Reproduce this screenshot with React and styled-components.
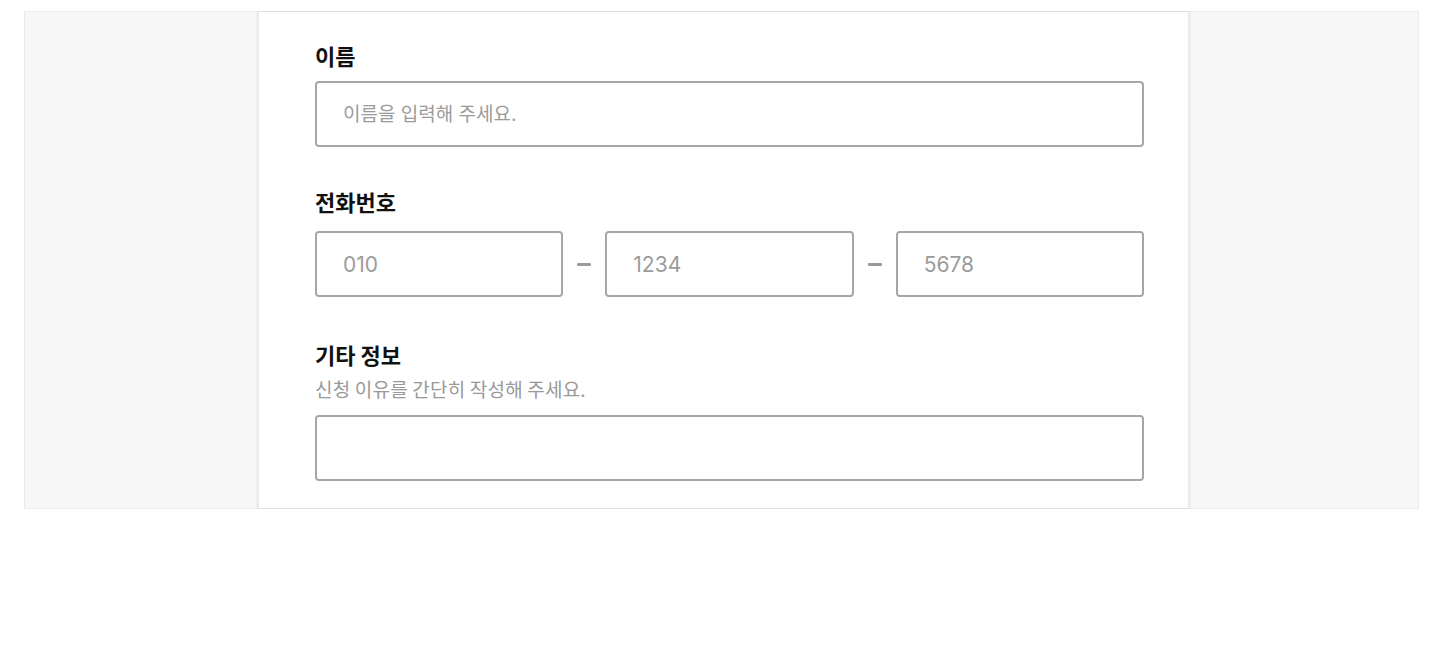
import styled, { createGlobalStyle } from "styled-components"

const GlobalStyle = createGlobalStyle`
  html, body {
    margin: 0;
    padding: 0;
    background: #fff;
  }
  body {
    font-family: "Noto Sans CJK KR", "Noto Sans", sans-serif;
    color: #111;
  }
  * { box-sizing: border-box; }
`;

const Frame = styled.div`
  margin: 11px 31px 0 24px;
  height: 498px;
  background: #f7f7f7;
  border: 1px solid #ebebeb;
  padding-left: 233px;
  display: flex;
`;

const Panel = styled.div`
  width: 931px;
  background: #fff;
  box-shadow: 1px 0 2px rgba(0, 0, 0, 0.08), -1px 0 2px rgba(0, 0, 0, 0.08);
  border-left: 1px solid #ececec;
  border-right: 1px solid #ececec;
  padding: 28px 44px 28px 56px;
  display: flex;
  flex-direction: column;
`;

const Field = styled.div`
  display: flex;
  flex-direction: column;
  margin-top: ${p => p.$top || 0}px;
`;

const Label = styled.div`
  font-size: 22px;
  font-weight: 700;
  line-height: 30px;
`;

const Hint = styled.div`
  font-size: 19px;
  line-height: 24px;
  letter-spacing: 0.2px;
  color: #999;
  margin-top: 8px;
`;

const Input = styled.input`
  width: 100%;
  height: 66px;
  margin-top: ${p => p.$gap || 11}px;
  border: 2px solid #a6a6a6;
  border-radius: 4px;
  padding: 0 26px;
  font-family: Inter, "Noto Sans CJK KR", sans-serif;
  font-size: 19px;
  color: #222;
  outline: none;
  background: #fff;

  &::placeholder {
    color: #9b9b9b;
  }
`;

const PhoneRow = styled.div`
  display: grid;
  grid-template-columns: 1fr 42px 1fr 42px 1fr;
  align-items: center;
  margin-top: 15px;

  & > input {
    margin-top: 0;
    font-size: 21px;
  }
`;

const Dash = styled.span`
  justify-self: center;
  width: 14px;
  height: 3px;
  background: #9a9a9a;
  border-radius: 1px;
`;

const App = () => {
  return (
    <>
      <GlobalStyle />
      <Frame>
        <Panel>
          <Field>
            <Label>이름</Label>
            <Input placeholder="이름을 입력해 주세요." />
          </Field>
          <Field $top={39}>
            <Label>전화번호</Label>
            <PhoneRow>
              <Input placeholder="010" />
              <Dash />
              <Input placeholder="1234" />
              <Dash />
              <Input placeholder="5678" />
            </PhoneRow>
          </Field>
          <Field $top={42}>
            <Label>기타 정보</Label>
            <Hint>신청 이유를 간단히 작성해 주세요.</Hint>
            <Input $gap={14} />
          </Field>
        </Panel>
      </Frame>
    </>
  )
}

export default App
